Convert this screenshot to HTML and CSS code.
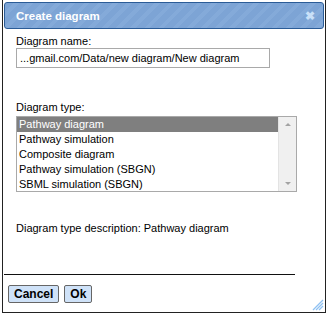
FILE: index.html
```html
<!DOCTYPE html>
<html lang="en">
<head>
  <meta charset="UTF-8" />
  <title>Create diagram</title>
  <link rel="stylesheet" href="styles.css">
</head>
<body>

<div class="dialog">
  <div class="titlebar">
    <span class="title">Create diagram</span>
    <span class="close">&#10006;</span>
  </div>

  <div class="content">
    <p class="label">Diagram name:</p>
    <div class="name-input">...gmail.com/Data/new diagram/New diagram</div>

    <p class="label type-label">Diagram type:</p>
    <div class="listbox">
      <div class="options">
        <div class="option selected">Pathway diagram</div>
        <div class="option">Pathway simulation</div>
        <div class="option">Composite diagram</div>
        <div class="option">Pathway simulation (SBGN)</div>
        <div class="option">SBML simulation (SBGN)</div>
      </div>
      <div class="scrollbar">
        <span class="arrow up"></span>
        <span class="arrow down"></span>
      </div>
    </div>

    <p class="description">Diagram type description: Pathway diagram</p>
  </div>

  <div class="footer">
    <button class="btn">Cancel</button>
    <button class="btn">Ok</button>
  </div>

  <svg class="grip" width="12" height="12" viewBox="0 0 12 12">
    <path d="M11 1 L1 11 M11 4 L4 11 M11 7 L7 11" stroke="#8fc1f2" stroke-width="1.3" fill="none"/>
  </svg>
</div>

</body>
</html>
```

FILE: styles.css
```css
body {
  margin: 0;
  background: #fff;
  font-family: "Liberation Sans", Arial, sans-serif;
  font-size: 11px;
  color: #000;
}

.dialog {
  position: relative;
  box-sizing: border-box;
  width: 324px;
  height: 313px;
  margin: 0 0 0 2px;
  border: 1px solid #222;
  border-top: none;
  padding: 2px 1px 0 1px;
  display: flex;
  flex-direction: column;
}

.titlebar {
  height: 27px;
  box-sizing: border-box;
  border: 1px solid #2b5c97;
  border-radius: 3px;
  background: repeating-linear-gradient(135deg, #7da4d5 0, #7da4d5 6px, #84aad9 6px, #84aad9 10px);
  display: flex;
  align-items: center;
  justify-content: space-between;
  padding: 0 8px 0 11px;
}

.title {
  color: #fff;
  font-size: 11.5px;
  font-weight: bold;
}

.close {
  color: #c9e0f8;
  font-size: 12px;
  font-weight: bold;
}

.content {
  flex: 1;
  padding: 5px 12px 0 12px;
}

.label {
  margin: 0;
  line-height: 15px;
}

.name-input {
  width: 254px;
  height: 20px;
  box-sizing: border-box;
  margin-top: -1px;
  border: 1px solid #a9a9a9;
  padding: 0 3px;
  line-height: 18px;
  white-space: nowrap;
  overflow: hidden;
}

.type-label {
  margin-top: 32px;
}

.listbox {
  width: 281px;
  height: 76px;
  box-sizing: border-box;
  margin-top: 1px;
  border: 1px solid #a9a9a9;
  display: flex;
}

.options {
  flex: 1;
}

.option {
  height: 15px;
  line-height: 15px;
  padding-left: 2px;
}

.option.selected {
  background: #7f7f7f;
  color: #fff;
}

.scrollbar {
  width: 17px;
  background: #f0f0f0;
  border-left: 1px solid #e3e3e3;
  display: flex;
  flex-direction: column;
  justify-content: space-between;
  align-items: center;
  padding: 6px 0;
}

.arrow {
  width: 0;
  height: 0;
  border-left: 3px solid transparent;
  border-right: 3px solid transparent;
}

.arrow.up {
  border-bottom: 3px solid #a3a3a3;
}

.arrow.down {
  border-top: 3px solid #a3a3a3;
}

.description {
  margin: 29px 0 0 0;
  line-height: 15px;
}

.footer {
  height: 37px;
  border-top: 1px solid #111;
  margin-right: 29px;
  display: flex;
  align-items: center;
  gap: 5px;
  padding: 0 4px;
}

.btn {
  font-family: "Liberation Sans", Arial, sans-serif;
  font-size: 12px;
  font-weight: bold;
  color: #000;
  background: #cfe2f8;
  border: 1px solid #666;
  border-radius: 2px;
  height: 18px;
  padding: 0 5px;
}

.grip {
  position: absolute;
  right: 1px;
  bottom: 1px;
}
```
